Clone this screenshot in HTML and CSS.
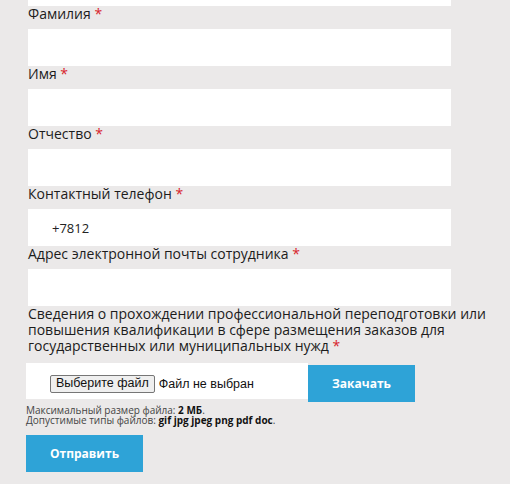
FILE: index.html
```html
<!DOCTYPE html>
<html>
<head>
    <meta charset="utf-8">
    <meta name="viewport" content="width=device-width, initial-scale=1.0">
    <title>Анкета сотрудника</title>
    <link rel="stylesheet" href="styles.css">
</head>
<body>
    <form class="anketa">
        <input type="text" class="field-input field-top">

        <label class="field-label" for="familia">Фамилия <span class="req">*</span></label>
        <input type="text" id="familia" class="field-input">

        <label class="field-label" for="imya">Имя <span class="req">*</span></label>
        <input type="text" id="imya" class="field-input">

        <label class="field-label" for="otchestvo">Отчество <span class="req">*</span></label>
        <input type="text" id="otchestvo" class="field-input">

        <label class="field-label" for="telefon">Контактный телефон <span class="req">*</span></label>
        <input type="text" id="telefon" class="field-input field-phone" value="+7812">

        <label class="field-label" for="email">Адрес электронной почты сотрудника <span class="req">*</span></label>
        <input type="text" id="email" class="field-input">

        <label class="field-label label-file" for="svedeniya">Сведения о прохождении профессиональной переподготовки или повышения квалификации в сфере размещения заказов для государственных или муниципальных нужд <span class="req">*</span></label>
        <div class="upload-row">
            <div class="upload-box">
                <!-- своя кнопка выбора файла, чтобы подписи были по-русски -->
                <input type="file" id="svedeniya" class="file-input">
                <label for="svedeniya" class="file-btn">Выберите файл</label>
                <span class="file-name">Файл не выбран</span>
            </div>
            <button type="button" class="btn btn-upload">Закачать</button>
        </div>
        <div class="file-help">
            Максимальный размер файла: <b>2 МБ</b>.<br>
            Допустимые типы файлов: <b>gif jpg jpeg png pdf doc</b>.
        </div>

        <button type="submit" class="btn btn-send">Отправить</button>
    </form>
</body>
</html>
```

FILE: styles.css
```css
body {
    margin: 0;
    background-color: #ebe9e9;
    font-family: "Open Sans", "Liberation Sans", sans-serif;
    color: #222;
}

.anketa {
    padding: 0 12px 0 28px;
    display: flex;
    flex-direction: column;
    align-items: flex-start;
}

/* поля ввода */
.field-input {
    display: block;
    box-sizing: border-box;
    width: 423px;
    height: 37px;
    margin: 0;
    padding: 0 24px;
    border: none;
    background-color: #fff;
    font-family: "Open Sans", sans-serif;
    font-size: 13px;
    color: #222;
}

.field-top {
    margin-top: -31px;
}

.field-label {
    display: block;
    font-size: 14px;
    line-height: 16px;
    margin-bottom: 7px;
    color: #1c1c1c;
}

.req {
    color: #d8232a;
}

.label-file {
    margin-bottom: 9px;
}

/* загрузка файла */
.upload-row {
    display: flex;
    align-items: flex-start;
    margin-left: -2px;
}

.upload-box {
    box-sizing: border-box;
    width: 282px;
    height: 36px;
    padding: 5px 0 0 24px;
    background-color: #fff;
    display: flex;
    align-items: center;
    font-family: "Liberation Sans", Arial, sans-serif;
    font-size: 12.5px;
    color: #111;
}

.file-input {
    display: none;
}

.file-btn {
    box-sizing: border-box;
    height: 18px;
    line-height: 15px;
    padding: 0 5px;
    border: 1px solid #767676;
    border-radius: 2px;
    background-color: #efefef;
    cursor: pointer;
}

.file-name {
    margin-left: 4px;
}

.btn {
    border: none;
    background-color: #2ea3d7;
    color: #fff;
    font-family: "Open Sans", sans-serif;
    font-weight: bold;
    font-size: 12px;
    cursor: pointer;
    height: 37px;
}

.btn-upload {
    width: 107px;
    margin-top: 2px;
}

.file-help {
    margin: 3px 0 0 -2px;
    font-size: 10px;
    line-height: 10px;
    color: #444;
}

.file-help b {
    color: #111;
}

.btn-send {
    width: 117px;
    margin: 10px 0 0 -2px;
}
```
